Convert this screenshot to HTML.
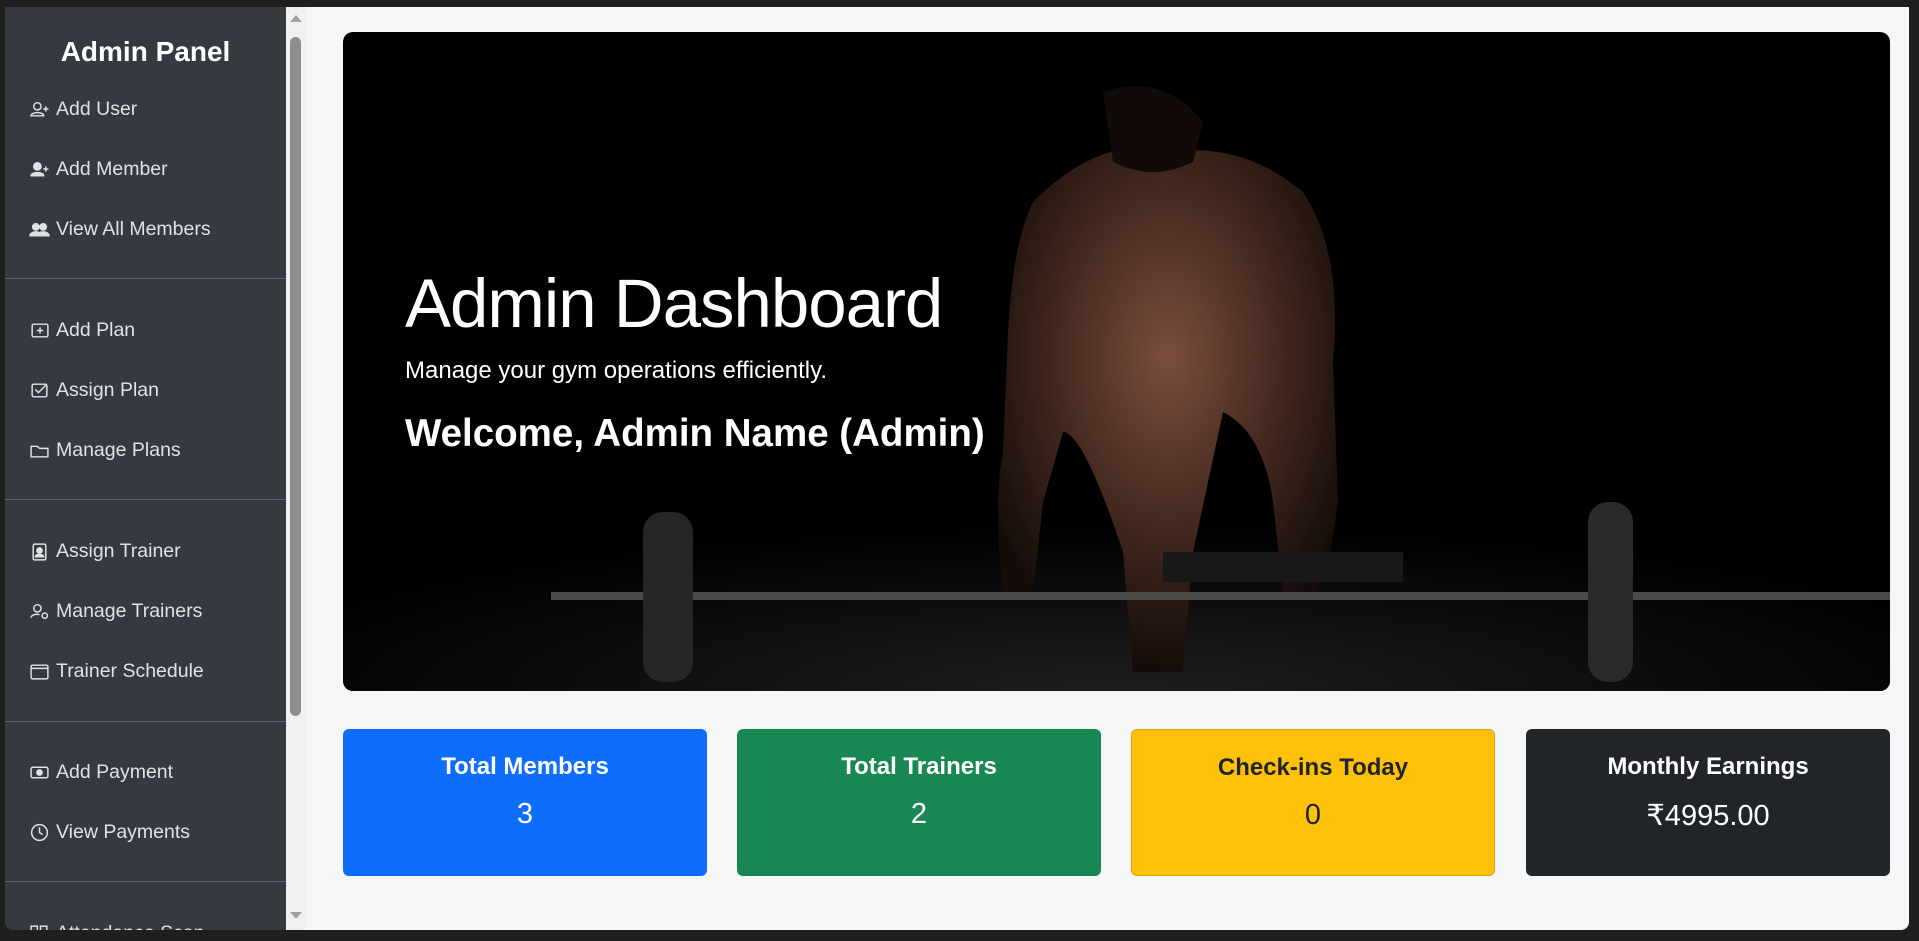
<!DOCTYPE html>
<html><head><meta charset="utf-8"><style>
*{box-sizing:border-box;margin:0;padding:0}
body{width:1919px;height:941px;background:#1f1f1f;font-family:"Liberation Sans",sans-serif;overflow:hidden;position:relative}
.sb{position:absolute;left:5px;top:7px;width:281px;height:923px;background:#343a40;border-bottom-left-radius:8px;overflow:hidden;color:#dee2e6}
.sb h2{position:absolute;left:0;width:281px;text-align:center;top:29px;font-size:28px;color:#fff;font-weight:bold}
.it{position:absolute;left:24px;font-size:19.5px;height:24px;line-height:24px;display:flex;align-items:center}
.it svg{width:21px;height:21px;margin-right:6px;fill:none;stroke:#dee2e6;stroke-width:1.4}
.hr{position:absolute;left:0;width:281px;height:1px;background:#5b6168}
.scr{position:absolute;left:286px;top:7px;width:20px;height:923px;background:#f1f1f1}
.th{position:absolute;left:290px;top:37px;width:11px;height:679px;background:#8e8e8e;border-radius:6px}
.main{position:absolute;left:306px;top:7px;width:1603px;height:923px;background:#f5f6f8;border-bottom-right-radius:8px}
.hero{position:absolute;left:343px;top:32px;width:1547px;height:659px;background:#000;border-radius:10px;overflow:hidden}
.hero .t{position:absolute;left:62px;top:237px;font-size:69px;color:#fff;font-weight:normal;letter-spacing:-1px;line-height:1}
.hero .s{position:absolute;left:62px;top:325px;font-size:24px;color:#fff}
.hero .w{position:absolute;left:62px;top:380px;font-size:38.5px;color:#fff;font-weight:bold}
.card{position:absolute;top:729px;width:364px;height:147px;border-radius:6px;text-align:center;color:#fff}
.card .a{margin-top:24px;font-size:24px;font-weight:bold}
.card .b{margin-top:17px;font-size:29px}
</style></head><body>
<div class="sb">
<h2>Admin Panel</h2>
<div class="it" style="top:90px"><svg viewBox="0 0 20 20"><circle cx="8" cy="7" r="3.5"/><path d="M2 16c0-4 12-4 12 0zM16 7v5M13.5 9.5h5"/></svg>Add User</div>
<div class="it" style="top:150px"><svg viewBox="0 0 20 20"><circle cx="8" cy="7" r="3.5" fill="#dee2e6"/><path d="M2 16c0-4 12-4 12 0z" fill="#dee2e6"/><path d="M16 7v5M13.5 9.5h5"/></svg>Add Member</div>
<div class="it" style="top:210px"><svg viewBox="0 0 20 20"><circle cx="6.5" cy="7.5" r="3" fill="#dee2e6"/><circle cx="13.5" cy="7.5" r="3" fill="#dee2e6"/><path d="M1 16c0-5 11-5 11 0zM8 16c0-5 11-5 11 0z" fill="#dee2e6"/></svg>View All Members</div>
<div class="hr" style="top:271px"></div>
<div class="it" style="top:311px"><svg viewBox="0 0 20 20"><rect x="3" y="4" width="15" height="12" rx="1.5"/><path d="M10.5 7v6M7.5 10h6"/></svg>Add Plan</div>
<div class="it" style="top:371px"><svg viewBox="0 0 20 20"><rect x="3" y="4" width="14" height="12" rx="1.5"/><path d="M6 9l3 3 7-7"/></svg>Assign Plan</div>
<div class="it" style="top:431px"><svg viewBox="0 0 20 20"><path d="M2 6h6l2 2h8v8H2z"/></svg>Manage Plans</div>
<div class="hr" style="top:492px"></div>
<div class="it" style="top:532px"><svg viewBox="0 0 20 20"><rect x="4" y="3" width="12" height="15" rx="1.5"/><circle cx="10" cy="9" r="2.5" fill="#dee2e6"/><path d="M6 15c0-3 8-3 8 0z" fill="#dee2e6"/></svg>Assign Trainer</div>
<div class="it" style="top:592px"><svg viewBox="0 0 20 20"><circle cx="8" cy="7" r="3.5"/><path d="M2 16c0-3 5-4 8-3"/><circle cx="15" cy="14" r="2.5"/></svg>Manage Trainers</div>
<div class="it" style="top:652px"><svg viewBox="0 0 20 20"><rect x="2" y="4" width="16" height="13" rx="1.5"/><path d="M2 7h16"/></svg>Trainer Schedule</div>
<div class="hr" style="top:714px"></div>
<div class="it" style="top:753px"><svg viewBox="0 0 20 20"><rect x="2" y="5" width="16" height="10" rx="1.5"/><circle cx="10" cy="10" r="2.5" fill="#dee2e6"/></svg>Add Payment</div>
<div class="it" style="top:813px"><svg viewBox="0 0 20 20"><circle cx="10" cy="10" r="7.5"/><path d="M10 5v5l3 2"/></svg>View Payments</div>
<div class="hr" style="top:874px"></div>
<div class="it" style="top:914px"><svg viewBox="0 0 20 20"><rect x="2" y="3" width="6" height="6"/><rect x="11" y="3" width="6" height="6"/></svg>Attendance Scan</div>
</div>
<div class="scr"></div><div class="th"></div>
<div style="position:absolute;left:290px;top:15px;width:0;height:0;border-left:6px solid transparent;border-right:6px solid transparent;border-bottom:7px solid #a0a0a0"></div>
<div style="position:absolute;left:290px;top:912px;width:0;height:0;border-left:6px solid transparent;border-right:6px solid transparent;border-top:7px solid #a0a0a0"></div>
<div class="main"></div>
<div class="hero">
<svg width="1547" height="659" viewBox="0 0 1547 659" style="position:absolute;left:0;top:0">
<defs>
<radialGradient id="sk" cx="50%" cy="40%" r="60%"><stop offset="0" stop-color="#7a4e3e"/><stop offset="0.6" stop-color="#3e251c"/><stop offset="1" stop-color="#140c09"/></radialGradient>
<radialGradient id="fl" cx="50%" cy="100%" r="60%"><stop offset="0" stop-color="#262626"/><stop offset="1" stop-color="#000"/></radialGradient>
</defs>
<rect x="0" y="380" width="1547" height="279" fill="url(#fl)" opacity="0.8"/>
<path d="M690 170 Q760 100 830 120 Q900 110 960 160 Q1000 220 990 330 L995 470 Q985 550 970 560 L940 560 L930 470 Q920 400 880 380 L850 520 L840 640 L790 640 L780 520 Q740 400 720 400 L700 470 L690 560 L660 560 Q650 470 660 420 L665 300 Q670 210 690 170Z" fill="url(#sk)"/>
<path d="M760 60 Q820 40 860 90 L850 130 Q810 150 770 130Z" fill="#120a08"/>
<rect x="208" y="560" width="1339" height="8" fill="#4a4a4a"/>
<rect x="300" y="480" width="50" height="170" rx="20" fill="#262626"/>
<rect x="1245" y="470" width="45" height="180" rx="20" fill="#2a2a2a"/>
<rect x="820" y="520" width="240" height="30" fill="#181818"/>
</svg>
<div class="t">Admin Dashboard</div>
<div class="s">Manage your gym operations efficiently.</div>
<div class="w">Welcome, Admin Name (Admin)</div>
</div>
<div class="card" style="left:343px;background:#0d6efd"><div class="a">Total Members</div><div class="b">3</div></div>
<div class="card" style="left:737px;background:#198754"><div class="a">Total Trainers</div><div class="b">2</div></div>
<div class="card" style="left:1131px;background:#ffc107;color:#212529;border:1px solid #d9a406"><div class="a">Check-ins Today</div><div class="b">0</div></div>
<div class="card" style="left:1526px;background:#212529"><div class="a">Monthly Earnings</div><div class="b">₹4995.00</div></div>
</body></html>
